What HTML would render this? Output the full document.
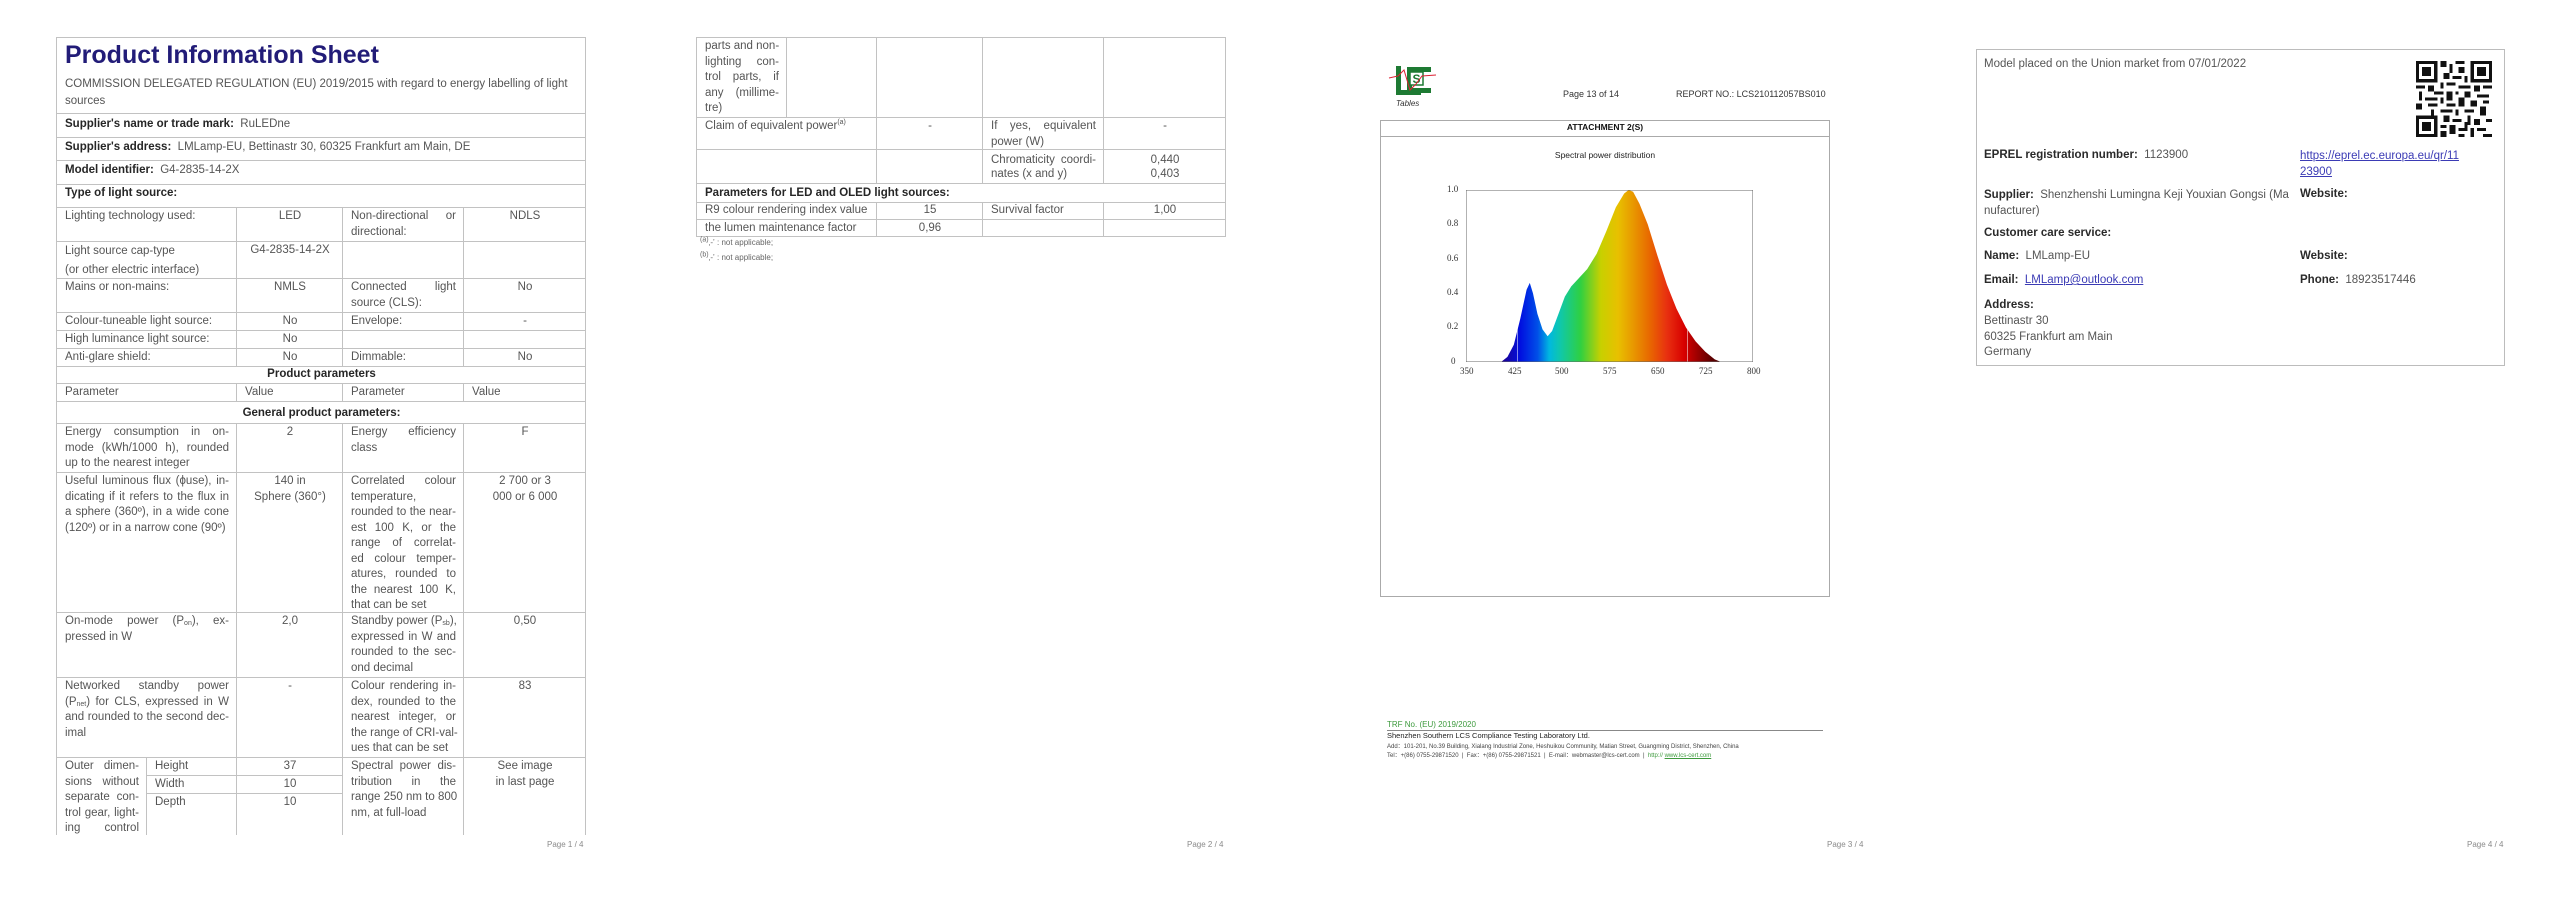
<!DOCTYPE html>
<html><head><meta charset="utf-8"><style>
*{margin:0;padding:0}
body{width:2560px;height:905px;background:#fff;position:relative;overflow:hidden;font-family:"Liberation Sans",sans-serif}
.c{position:absolute;box-sizing:border-box;border:1px solid #c2c2c2;padding:1px 7px 0 8px;font-size:11.5px;line-height:15.5px;color:#555;white-space:nowrap}
.c b{color:#262626}
.nb{border-bottom:none}
.ctr{text-align:center}
.j{display:block;text-align:justify;text-align-last:justify}
.l{display:block}
sub,sup{font-size:7px;line-height:0}
sub{vertical-align:-1px}
.t{position:absolute;white-space:nowrap}
.pn{position:absolute;font-size:8px;color:#8a8a8a;top:840px}
.ax{position:absolute;font-family:"Liberation Serif",serif;font-size:9px;color:#333}
.p4{position:absolute;font-size:11.5px;color:#555;white-space:nowrap}
.p4 b{color:#2a2a2a}
a{color:#3b3bb5}
</style></head><body>

<!-- PAGE 1 -->
<div class="c" style="left:56px;top:37px;width:530px;height:77px;padding:0 8px">
<div style="font-size:25px;font-weight:bold;color:#221c78;line-height:32px;margin-top:1px">Product Information Sheet</div>
<div style="line-height:16.5px;margin-top:5px">COMMISSION DELEGATED REGULATION (EU) 2019/2015 with regard to energy labelling of light<br>sources</div>
</div>
<div class="c" style="left:56px;top:113px;width:530px;height:25px;padding-top:3px"><b>Supplier's name or trade mark:</b>&nbsp; RuLEDne</div>
<div class="c" style="left:56px;top:137px;width:530px;height:24px;padding-top:2px"><b>Supplier's address:</b>&nbsp; LMLamp-EU, Bettinastr 30, 60325 Frankfurt am Main, DE</div>
<div class="c" style="left:56px;top:160px;width:530px;height:25px;padding-top:2px"><b>Model identifier:</b>&nbsp; G4-2835-14-2X</div>
<div class="c" style="left:56px;top:184px;width:530px;height:24px;padding-top:1px"><b>Type of light source:</b></div>

<div class="c" style="left:56px;top:207px;width:181px;height:35px">Lighting technology used:</div>
<div class="c ctr" style="left:236px;top:207px;width:107px;height:35px">LED</div>
<div class="c" style="left:342px;top:207px;width:122px;height:35px"><span class="j">Non-directional or</span><span class="l">directional:</span></div>
<div class="c ctr" style="left:463px;top:207px;width:123px;height:35px">NDLS</div>

<div class="c" style="left:56px;top:241px;width:181px;height:38px;line-height:19px;padding-top:0">Light source cap-type<br>(or other electric interface)</div>
<div class="c ctr" style="left:236px;top:241px;width:107px;height:38px">G4-2835-14-2X</div>
<div class="c" style="left:342px;top:241px;width:122px;height:38px"></div>
<div class="c" style="left:463px;top:241px;width:123px;height:38px"></div>

<div class="c" style="left:56px;top:278px;width:181px;height:35px">Mains or non-mains:</div>
<div class="c ctr" style="left:236px;top:278px;width:107px;height:35px">NMLS</div>
<div class="c" style="left:342px;top:278px;width:122px;height:35px"><span class="j">Connected light</span><span class="l">source (CLS):</span></div>
<div class="c ctr" style="left:463px;top:278px;width:123px;height:35px">No</div>

<div class="c" style="left:56px;top:312px;width:181px;height:19px">Colour-tuneable light source:</div>
<div class="c ctr" style="left:236px;top:312px;width:107px;height:19px">No</div>
<div class="c" style="left:342px;top:312px;width:122px;height:19px">Envelope:</div>
<div class="c ctr" style="left:463px;top:312px;width:123px;height:19px">-</div>

<div class="c" style="left:56px;top:330px;width:181px;height:19px">High luminance light source:</div>
<div class="c ctr" style="left:236px;top:330px;width:107px;height:19px">No</div>
<div class="c" style="left:342px;top:330px;width:122px;height:19px"></div>
<div class="c" style="left:463px;top:330px;width:123px;height:19px"></div>

<div class="c" style="left:56px;top:348px;width:181px;height:19px">Anti-glare shield:</div>
<div class="c ctr" style="left:236px;top:348px;width:107px;height:19px">No</div>
<div class="c" style="left:342px;top:348px;width:122px;height:19px">Dimmable:</div>
<div class="c ctr" style="left:463px;top:348px;width:123px;height:19px">No</div>

<div class="c ctr" style="left:56px;top:366px;width:530px;height:18px;padding-top:0"><b>Product parameters</b></div>

<div class="c" style="left:56px;top:383px;width:181px;height:19px">Parameter</div>
<div class="c" style="left:236px;top:383px;width:107px;height:19px">Value</div>
<div class="c" style="left:342px;top:383px;width:122px;height:19px">Parameter</div>
<div class="c" style="left:463px;top:383px;width:123px;height:19px">Value</div>

<div class="c ctr" style="left:56px;top:401px;width:530px;height:23px;padding-top:4px"><b>General product parameters:</b></div>

<div class="c" style="left:56px;top:423px;width:181px;height:50px"><span class="j">Energy consumption in on-</span><span class="j">mode (kWh/1000 h), rounded</span><span class="l">up to the nearest integer</span></div>
<div class="c ctr" style="left:236px;top:423px;width:107px;height:50px">2</div>
<div class="c" style="left:342px;top:423px;width:122px;height:50px"><span class="j">Energy efficiency</span><span class="l">class</span></div>
<div class="c ctr" style="left:463px;top:423px;width:123px;height:50px">F</div>

<div class="c" style="left:56px;top:472px;width:181px;height:141px"><span class="j">Useful luminous flux (ϕuse), in-</span><span class="j">dicating if it refers to the flux in</span><span class="j">a sphere (360º), in a wide cone</span><span class="l">(120º) or in a narrow cone (90º)</span></div>
<div class="c ctr" style="left:236px;top:472px;width:107px;height:141px">140 in<br>Sphere (360°)</div>
<div class="c" style="left:342px;top:472px;width:122px;height:141px"><span class="j">Correlated colour</span><span class="l">temperature,</span><span class="j">rounded to the near-</span><span class="j">est 100 K, or the</span><span class="j">range of correlat-</span><span class="j">ed colour temper-</span><span class="j">atures, rounded to</span><span class="j">the nearest 100 K,</span><span class="l">that can be set</span></div>
<div class="c ctr" style="left:463px;top:472px;width:123px;height:141px">2 700 or 3<br>000 or 6 000</div>

<div class="c" style="left:56px;top:612px;width:181px;height:66px"><span class="j">On-mode power (P<sub>on</sub>), ex-</span><span class="l">pressed in W</span></div>
<div class="c ctr" style="left:236px;top:612px;width:107px;height:66px">2,0</div>
<div class="c" style="left:342px;top:612px;width:122px;height:66px"><span class="j">Standby power (P<sub>sb</sub>),</span><span class="j">expressed in W and</span><span class="j">rounded to the sec-</span><span class="l">ond decimal</span></div>
<div class="c ctr" style="left:463px;top:612px;width:123px;height:66px">0,50</div>

<div class="c" style="left:56px;top:677px;width:181px;height:81px"><span class="j">Networked standby power</span><span class="j">(P<sub>net</sub>) for CLS, expressed in W</span><span class="j">and rounded to the second dec-</span><span class="l">imal</span></div>
<div class="c ctr" style="left:236px;top:677px;width:107px;height:81px">-</div>
<div class="c" style="left:342px;top:677px;width:122px;height:81px"><span class="j">Colour rendering in-</span><span class="j">dex, rounded to the</span><span class="j">nearest integer, or</span><span class="j">the range of CRI-val-</span><span class="l">ues that can be set</span></div>
<div class="c ctr" style="left:463px;top:677px;width:123px;height:81px">83</div>

<div class="c nb" style="left:56px;top:757px;width:91px;height:78px"><span class="j">Outer dimen-</span><span class="j">sions without</span><span class="j">separate con-</span><span class="j">trol gear, light-</span><span class="j">ing control</span></div>
<div class="c" style="left:146px;top:757px;width:91px;height:19px">Height</div>
<div class="c ctr" style="left:236px;top:757px;width:107px;height:19px">37</div>
<div class="c" style="left:146px;top:775px;width:91px;height:19px">Width</div>
<div class="c ctr" style="left:236px;top:775px;width:107px;height:19px">10</div>
<div class="c nb" style="left:146px;top:793px;width:91px;height:42px">Depth</div>
<div class="c ctr nb" style="left:236px;top:793px;width:107px;height:42px">10</div>
<div class="c nb" style="left:342px;top:757px;width:122px;height:78px"><span class="j">Spectral power dis-</span><span class="j">tribution in the</span><span class="j">range 250 nm to 800</span><span class="l">nm, at full-load</span></div>
<div class="c ctr nb" style="left:463px;top:757px;width:123px;height:78px">See image<br>in last page</div>
<div class="pn" style="left:547px">Page 1 / 4</div>

<!-- PAGE 2 -->
<div class="c" style="left:696px;top:37px;width:91px;height:81px"><span class="l">parts and non-</span><span class="j">lighting con-</span><span class="j">trol parts, if</span><span class="j">any (millime-</span><span class="l">tre)</span></div>
<div class="c" style="left:786px;top:37px;width:91px;height:81px"></div>
<div class="c" style="left:876px;top:37px;width:107px;height:81px"></div>
<div class="c" style="left:982px;top:37px;width:122px;height:81px"></div>
<div class="c" style="left:1103px;top:37px;width:123px;height:81px"></div>

<div class="c" style="left:696px;top:117px;width:181px;height:33px">Claim of equivalent power<sup>(a)</sup></div>
<div class="c ctr" style="left:876px;top:117px;width:107px;height:33px">-</div>
<div class="c" style="left:982px;top:117px;width:122px;height:33px"><span class="j">If yes, equivalent</span><span class="l">power (W)</span></div>
<div class="c ctr" style="left:1103px;top:117px;width:123px;height:33px">-</div>

<div class="c" style="left:696px;top:149px;width:181px;height:35px"></div>
<div class="c" style="left:876px;top:149px;width:107px;height:35px"></div>
<div class="c" style="left:982px;top:149px;width:122px;height:35px;padding-top:4px;line-height:13.5px"><span class="j">Chromaticity coordi-</span><span class="l">nates (x and y)</span></div>
<div class="c ctr" style="left:1103px;top:149px;width:123px;height:35px;padding-top:4px;line-height:13.5px">0,440<br>0,403</div>

<div class="c" style="left:696px;top:183px;width:530px;height:20px;padding-top:2px"><b>Parameters for LED and OLED light sources:</b></div>
<div class="c" style="left:696px;top:202px;width:181px;height:18px;padding-top:0">R9 colour rendering index value</div>
<div class="c ctr" style="left:876px;top:202px;width:107px;height:18px;padding-top:0">15</div>
<div class="c" style="left:982px;top:202px;width:122px;height:18px;padding-top:0">Survival factor</div>
<div class="c ctr" style="left:1103px;top:202px;width:123px;height:18px;padding-top:0">1,00</div>
<div class="c" style="left:696px;top:219px;width:181px;height:18px;padding-top:1px">the lumen maintenance factor</div>
<div class="c ctr" style="left:876px;top:219px;width:107px;height:18px;padding-top:1px">0,96</div>
<div class="c" style="left:982px;top:219px;width:122px;height:18px"></div>
<div class="c" style="left:1103px;top:219px;width:123px;height:18px"></div>
<div class="t" style="left:700px;top:238px;font-size:8px;color:#666"><sup style="font-size:7px">(a)</sup>‚-‛ : not applicable;</div>
<div class="t" style="left:700px;top:253px;font-size:8px;color:#666"><sup style="font-size:7px">(b)</sup>‚-‛ : not applicable;</div>
<div class="pn" style="left:1187px">Page 2 / 4</div>

<!-- PAGE 3 -->
<svg style="position:absolute;left:1388px;top:64px" width="56" height="36" viewBox="0 0 56 36">
<path d="M8 2h5v24h20v5H8z" fill="#1e7a33"/>
<path d="M19 3h24v5h-19v16h19v5H19z" fill="#1e7a33"/>
<rect x="22" y="8" width="13" height="13" fill="#fff" stroke="#1e7a33" stroke-width="1.5"/>
<text x="28.5" y="19" font-family="Liberation Sans" font-weight="bold" font-size="12" fill="#1e7a33" text-anchor="middle">S</text>
<path d="M1 14 L10 12 L16 6 L22 26 L28 20 L34 12 L48 11" fill="none" stroke="#d23" stroke-width="1"/>
</svg>
<div class="t" style="left:1396px;top:99px;font-size:8px;font-style:italic;color:#333">Tables</div>
<div class="t" style="left:1563px;top:89px;font-size:9px;color:#333">Page 13 of 14</div>
<div class="t" style="left:1676px;top:89px;font-size:9px;color:#333">REPORT NO.: LCS210112057BS010</div>
<div style="position:absolute;left:1380px;top:120px;width:450px;height:477px;box-sizing:border-box;border:1.5px solid #aaa"></div>
<div style="position:absolute;left:1380px;top:136px;width:450px;height:1px;background:#aaa"></div>
<div class="t" style="left:1380px;width:450px;text-align:center;top:122px;font-size:8.5px;font-weight:bold;color:#111">ATTACHMENT 2(S)</div>
<div class="t" style="left:1380px;width:450px;text-align:center;top:150px;font-size:8.5px;color:#222">Spectral power distribution</div>
<svg style="position:absolute;left:1466px;top:190px" width="287" height="172" viewBox="350 0 450 1" preserveAspectRatio="none">
<defs><linearGradient id="sp" gradientUnits="userSpaceOnUse" x1="350" y1="0" x2="800" y2="0">
<stop offset="0.12" stop-color="#20008a"/><stop offset="0.19" stop-color="#0010e0"/><stop offset="0.25" stop-color="#0050e8"/><stop offset="0.29" stop-color="#00b8e0"/><stop offset="0.33" stop-color="#10c8a8"/><stop offset="0.40" stop-color="#30d040"/><stop offset="0.47" stop-color="#c8d000"/><stop offset="0.53" stop-color="#e8c000"/><stop offset="0.58" stop-color="#e89a00"/><stop offset="0.64" stop-color="#e86800"/><stop offset="0.70" stop-color="#e83010"/><stop offset="0.76" stop-color="#d80000"/><stop offset="0.86" stop-color="#580000"/>
</linearGradient></defs>
<path d="M405 1 L415 0.97 L425 0.9 L435 0.75 L445 0.58 L450 0.54 L455 0.6 L462 0.72 L470 0.81 L478 0.85 L485 0.82 L495 0.72 L505 0.62 L515 0.56 L525 0.52 L540 0.46 L555 0.37 L570 0.24 L585 0.1 L598 0.02 L605 0 L612 0.01 L622 0.08 L635 0.2 L650 0.38 L665 0.55 L680 0.69 L695 0.8 L710 0.88 L725 0.94 L740 0.985 L750 1 Z" fill="url(#sp)"/>
<rect x="430" y="0" width="1" height="1" fill="#fff" opacity="0.8"/>
<rect x="697" y="0" width="1" height="1" fill="#fff" opacity="0.8"/>
<rect x="350" y="0" width="450" height="1" fill="none" stroke="#666" stroke-width="1" vector-effect="non-scaling-stroke"/>
</svg>
<div class="ax" style="left:1447px;top:184px">1.0</div>
<div class="ax" style="left:1447px;top:218px">0.8</div>
<div class="ax" style="left:1447px;top:253px">0.6</div>
<div class="ax" style="left:1447px;top:287px">0.4</div>
<div class="ax" style="left:1447px;top:321px">0.2</div>
<div class="ax" style="left:1451px;top:356px">0</div>
<div class="ax" style="left:1460px;top:366px">350</div>
<div class="ax" style="left:1508px;top:366px">425</div>
<div class="ax" style="left:1555px;top:366px">500</div>
<div class="ax" style="left:1603px;top:366px">575</div>
<div class="ax" style="left:1651px;top:366px">650</div>
<div class="ax" style="left:1699px;top:366px">725</div>
<div class="ax" style="left:1747px;top:366px">800</div>
<div class="t" style="left:1387px;top:720px;font-size:8px;color:#3d9a3d">TRF No. (EU) 2019/2020</div>
<div style="position:absolute;left:1387px;top:730px;width:436px;height:1px;background:#888"></div>
<div class="t" style="left:1387px;top:731px;font-size:7.5px;color:#222">Shenzhen Southern LCS Compliance Testing Laboratory Ltd.</div>
<div class="t" style="left:1387px;top:741px;font-size:6px;color:#444">Add：101-201, No.39 Building, Xialang Industrial Zone, Heshuikou Community, Matian Street, Guangming District, Shenzhen, China</div>
<div class="t" style="left:1387px;top:750px;font-size:6px;color:#444">Tel：+(86) 0755-29871520 &nbsp;| &nbsp;Fax：+(86) 0755-29871521 &nbsp;| &nbsp;E-mail：webmaster@lcs-cert.com &nbsp;| &nbsp;<span style="color:#3d9a3d">http:// <u>www.lcs-cert.com</u></span></div>
<div class="pn" style="left:1827px">Page 3 / 4</div>

<!-- PAGE 4 -->
<div style="position:absolute;left:1976px;top:49px;width:529px;height:317px;box-sizing:border-box;border:1.5px solid #bcbcbc"></div>
<div class="p4" style="left:1984px;top:58px">Model placed on the Union market from 07/01/2022</div>
<svg style="position:absolute;left:2416px;top:61px" width="76" height="76" viewBox="0 0 25 25" shape-rendering="crispEdges">
<g fill="#111"><path d="M0 0h7v7H0zM18 0h7v7h-7zM0 18h7v7H0z"/></g>
<g fill="#fff"><path d="M1 1h5v5H1zM19 1h5v5h-5zM1 19h5v5H1z"/></g>
<g fill="#111"><path d="M2 2h3v3H2zM20 2h3v3h-3zM2 20h3v3H2z"/>
<path d="M8 0h2v2H8zM11 1h1v3h-1zM13 0h3v1h-3zM14 2h2v2h-2zM9 4h2v2H9zM12 5h3v1h-3zM16 5h1v2h-1zM8 7h1v2H8zM10 7h3v1h-3zM0 8h3v1H0zM4 8h2v2H4zM14 8h4v1h-4zM19 8h2v2h-2zM22 8h3v1h-3zM1 10h1v3H1zM6 10h3v1H6zM10 10h2v3h-2zM13 10h1v1h-1zM16 10h2v2h-2zM20 11h4v1h-4zM3 12h4v1H3zM8 12h1v2H8zM14 12h2v3h-2zM18 13h2v2h-2zM22 13h2v1h-2zM0 14h2v2H0zM4 14h3v1H4zM10 14h3v1h-3zM5 16h1v2H5zM8 16h4v1H8zM13 16h1v2h-1zM16 16h3v1h-3zM21 15h2v3h-2zM9 18h2v2H9zM12 19h3v1h-3zM17 18h1v3h-1zM19 19h2v2h-2zM23 19h2v1h-2zM8 21h2v1H8zM11 21h2v3h-2zM14 22h3v1h-3zM18 22h1v3h-1zM20 22h3v1h-3zM22 24h3v1h-3zM8 23h2v2H8zM14 24h2v1h-2zM16 20h1v2h-1z"/></g>
</svg>
<div class="p4" style="left:1984px;top:149px"><b>EPREL registration number:</b>&nbsp; 1123900</div>
<div class="p4" style="left:2300px;top:149px;line-height:15.5px"><a><u>https://eprel.ec.europa.eu/qr/11</u></a><br><a><u>23900</u></a></div>
<div class="p4" style="left:1984px;top:188px;line-height:15.5px"><b>Supplier:</b>&nbsp; Shenzhenshi Lumingna Keji Youxian Gongsi (Ma<br>nufacturer)</div>
<div class="p4" style="left:2300px;top:188px"><b>Website:</b></div>
<div class="p4" style="left:1984px;top:227px"><b>Customer care service:</b></div>
<div class="p4" style="left:1984px;top:250px"><b>Name:</b>&nbsp; LMLamp-EU</div>
<div class="p4" style="left:2300px;top:250px"><b>Website:</b></div>
<div class="p4" style="left:1984px;top:274px"><b>Email:</b>&nbsp; <a><u>LMLamp@outlook.com</u></a></div>
<div class="p4" style="left:2300px;top:274px"><b>Phone:</b>&nbsp; 18923517446</div>
<div class="p4" style="left:1984px;top:298px;line-height:15.8px"><b>Address:</b><br>Bettinastr 30<br>60325 Frankfurt am Main<br>Germany</div>
<div class="pn" style="left:2467px">Page 4 / 4</div>
</body></html>
